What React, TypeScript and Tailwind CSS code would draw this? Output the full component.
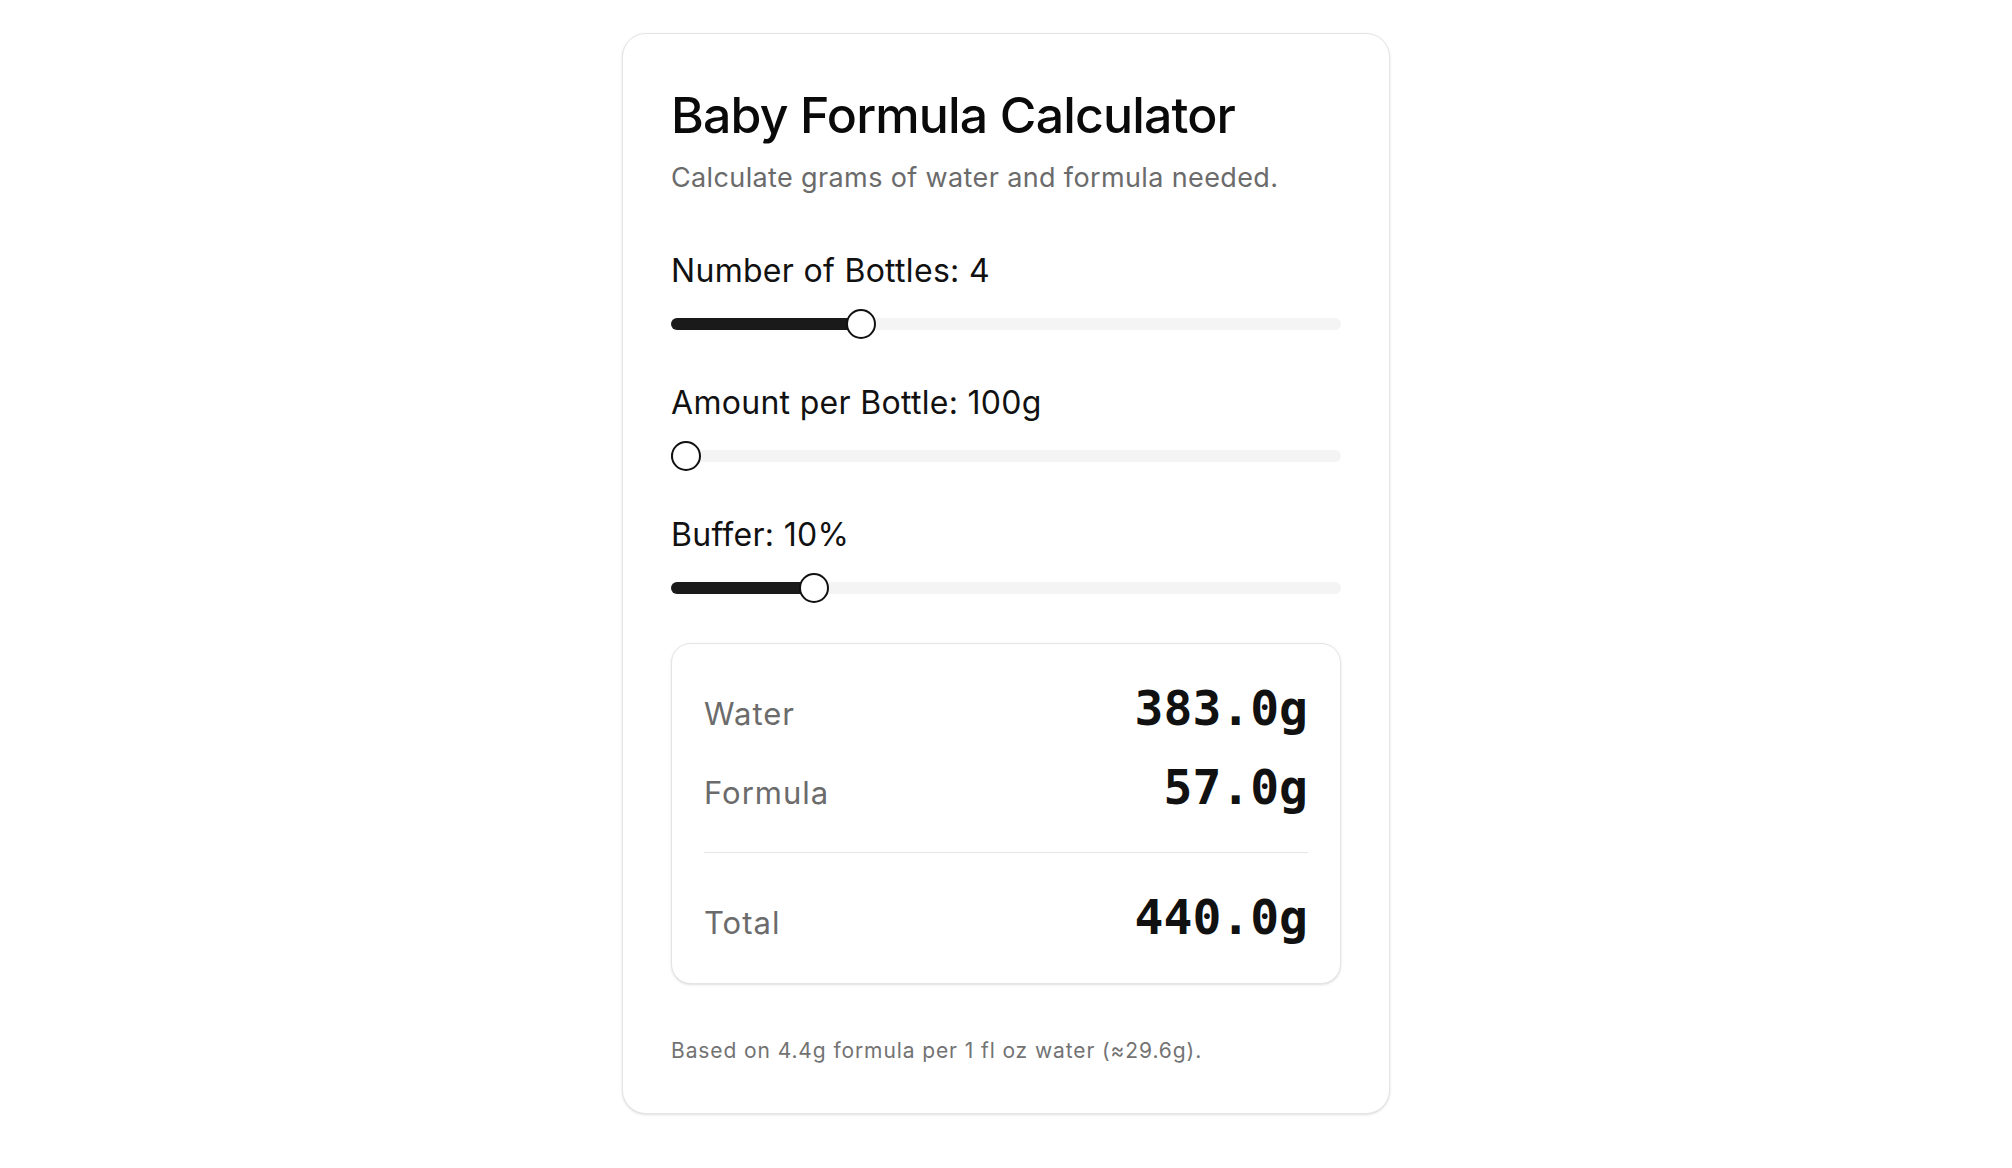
import { useState } from "react";

const FORMULA_PER_OZ = 4.4;
const WATER_PER_OZ = 29.6;

type SliderProps = {
  label: string;
  value: number;
  min: number;
  max: number;
  onChange: (v: number) => void;
};

function RangeSlider({ label, value, min, max, onChange }: SliderProps) {
  const pct = (value - min) / (max - min);

  return (
    <div>
      <div className="text-[32px] leading-[40px] tracking-[0.3px] text-[#111111]">{label}</div>
      <div className="relative mt-[18px] flex h-[30px] items-center">
        <div className="h-3 w-full rounded-full bg-[#f4f4f4]" />
        <div
          className="absolute left-0 h-3 rounded-full bg-[#1a1a1a]"
          style={{ width: `calc(15px + ${pct} * (100% - 30px))` }}
        />
        <div
          className="absolute top-0 h-[30px] w-[30px] rounded-full border-2 border-[#111111] bg-white"
          style={{ left: `calc(${pct} * (100% - 30px))` }}
        />
        <input
          type="range"
          min={min}
          max={max}
          value={value}
          onChange={(e) => onChange(Number(e.target.value))}
          className="absolute inset-0 h-full w-full cursor-pointer opacity-0"
        />
      </div>
    </div>
  );
}

function ResultRow({ label, amount }: { label: string; amount: number }) {
  return (
    <div className="flex items-baseline justify-between">
      <span className="text-[31px] tracking-[1px] text-[#6b6b6b]">{label}</span>
      <span className="font-['DejaVu_Sans_Mono',monospace] text-[48px] leading-[56px] font-bold text-[#111111]">
        {amount.toFixed(1)}g
      </span>
    </div>
  );
}

export default function App() {
  const [bottles, setBottles] = useState(4);
  const [amount, setAmount] = useState(100);
  const [buffer, setBuffer] = useState(10);

  const total = bottles * amount * (1 + buffer / 100);
  const water = Math.round((total * WATER_PER_OZ) / (WATER_PER_OZ + FORMULA_PER_OZ));
  const formula = total - water;

  return (
    <div className="min-h-screen bg-white pt-[33px] font-['Inter',sans-serif]">
      <div className="mx-auto w-[768px] rounded-3xl border border-[#e5e5e5] bg-white px-12 pt-12 pb-12 shadow-sm">
        {/* Header */}
        <h1 className="text-[50px] leading-[66px] font-medium tracking-[-0.017em] text-[#0a0a0a]">
          Baby Formula Calculator
        </h1>
        <p className="mt-3 text-[27px] leading-[36px] tracking-[0.37px] text-[#6b6b6b]">
          Calculate grams of water and formula needed.
        </p>

        {/* Sliders */}
        <div className="mt-[55px] flex flex-col gap-[44px]">
          <RangeSlider label={`Number of Bottles: ${bottles}`} value={bottles} min={1} max={12} onChange={setBottles} />
          <RangeSlider label={`Amount per Bottle: ${amount}g`} value={amount} min={100} max={300} onChange={setAmount} />
          <RangeSlider label={`Buffer: ${buffer}%`} value={buffer} min={0} max={50} onChange={setBuffer} />
        </div>

        {/* Results */}
        <div className="mt-10 rounded-[20px] border border-[#e5e5e5] bg-white px-8 pt-9 pb-9 shadow-sm">
          <div className="flex flex-col gap-[21px]">
            <ResultRow label="Water" amount={water} />
            <ResultRow label="Formula" amount={formula} />
          </div>
          <div className="my-9 h-px bg-[#e5e5e5]" />
          <ResultRow label="Total" amount={total} />
        </div>

        <p className="mt-[53px] text-[21px] leading-[28px] tracking-[0.9px] text-[#737373]">
          Based on {FORMULA_PER_OZ}g formula per 1 fl oz water (≈{WATER_PER_OZ}g).
        </p>
      </div>
    </div>
  );
}
